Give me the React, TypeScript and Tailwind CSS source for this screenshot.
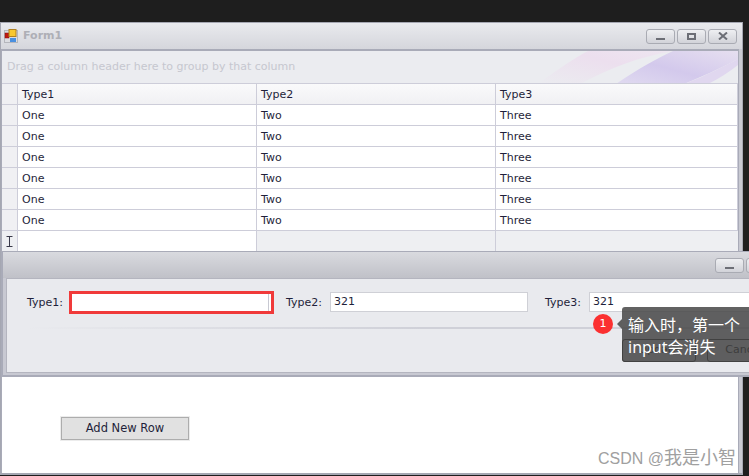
const rows = Array.from({ length: 6 });

const gridCols = "grid grid-cols-[16px_239px_239px_242px]";

const cell = "border-r border-b border-[#cdcdd9] pl-[4px] pt-[2px] flex items-center";

const TitleButton = ({ children }: { children: React.ReactNode }) => (
  <div className="w-[29px] h-[15px] rounded-[3px] border border-[#a9abb3] bg-gradient-to-b from-[#eeeff2] to-[#d2d3d9] flex items-center justify-center">
    {children}
  </div>
);

const FormIcon = () => (
  <svg width="14" height="14" viewBox="0 0 14 14" className="shrink-0">
    <rect x="0.5" y="1.5" width="13" height="12" fill="#dcdde2" stroke="#b5b6bc" />
    <rect x="1" y="4" width="4" height="5" fill="#c01810" stroke="#801010" strokeWidth="0.5" />
    <rect x="5" y="0.5" width="7" height="7" fill="#f8c830" stroke="#b08020" />
    <rect x="6" y="9" width="6" height="4" fill="#4a90e0" />
  </svg>
);

const WindowButtons = () => (
  <>
    <TitleButton>
      <div className="w-[9px] h-[2px] mt-[6px] bg-[#6c6e76]" />
    </TitleButton>
    <TitleButton>
      <div className="w-[9px] h-[7px] border-2 border-[#6c6e76]" />
    </TitleButton>
    <TitleButton>
      <svg width="10" height="8" viewBox="0 0 10 8">
        <path d="M1 0.5 L9 7.5 M9 0.5 L1 7.5" stroke="#6c6e76" strokeWidth="2" />
      </svg>
    </TitleButton>
  </>
);

const Banner = () => (
  <svg width="200" height="33" viewBox="0 0 200 33" className="absolute right-0 top-0">
    <defs>
      <linearGradient id="pink" x1="0" y1="1" x2="1" y2="0">
        <stop offset="0" stopColor="#ebecf0" />
        <stop offset="0.6" stopColor="#ecdfee" />
        <stop offset="1" stopColor="#eee6f1" />
      </linearGradient>
      <linearGradient id="purple" x1="0" y1="1" x2="1" y2="0">
        <stop offset="0" stopColor="#e0daf0" />
        <stop offset="0.45" stopColor="#d3c9ec" />
        <stop offset="1" stopColor="#e6dff0" />
      </linearGradient>
    </defs>
    <path d="M0 33 C25 15 40 5 50 0 L135 0 C100 6 70 18 42 33 Z" fill="url(#pink)" />
    <path d="M78 33 C100 18 118 8 135 0 L200 0 L200 8 C180 19 160 27 146 33 Z" fill="url(#purple)" />
    <path d="M146 33 C165 26 185 16 200 8 L200 14 C190 22 180 28 170 33 Z" fill="#e0d7ef" />
  </svg>
);

const Field = ({
  label,
  value,
  labelWidth,
  inputWidth,
  className = "",
}: {
  label: string;
  value: string;
  labelWidth: string;
  inputWidth: string;
  className?: string;
}) => (
  <div className={`flex items-center ${className}`}>
    <span className={`pt-[2px] text-[11px] text-[#1f1f3a] ${labelWidth}`}>{label}</span>
    <div className={`h-[20px] ${inputWidth} bg-white border border-[#cfd0d6] pl-[3px] text-[11px] leading-[18px] text-[#1f1f3a]`}>
      {value}
    </div>
  </div>
);

export default function App() {
  return (
    <div
      className="relative w-[749px] h-[476px] overflow-hidden bg-[#1e1e1e] pt-[22px]"
      style={{ fontFamily: '"DejaVu Sans", "Noto Sans CJK SC", sans-serif' }}
    >
      <div className="w-[743px] h-[453px] border border-[#a5a7b2] border-b-[2px] bg-[#c8c9d2] flex flex-col">
        <div className="h-[26px] shrink-0 bg-gradient-to-b from-[#e9eaee] to-[#d5d6dc] flex items-center pl-[3px] pr-[5px]">
          <FormIcon />
          <span className="ml-[5px] text-[11px] font-bold text-[#aeafb6]">Form1</span>
          <div className="ml-auto flex gap-[2px]">
            <WindowButtons />
          </div>
        </div>
        <div className="flex-1 mr-[3px] bg-white border-l border-t-2 border-r border-[#a9abb8]">
          <div className="relative h-[33px] bg-[#ebecf0] border-b border-[#cdcdd9] overflow-hidden flex items-center pl-[5px]">
            <span className="text-[11px] text-[#c6c7cf]">Drag a column header here to group by that column</span>
            <Banner />
          </div>
          <div className={`${gridCols} h-[21px] text-[11px] text-[#1f1f3a] bg-gradient-to-b from-[#fafafb] to-[#f0f0f3]`}>
            <div className="border-r border-b border-[#cdcdd9] bg-[#f0f0f3]" />
            <div className={cell}>Type1</div>
            <div className={cell}>Type2</div>
            <div className={cell}>Type3</div>
          </div>
          {rows.map((_, i) => (
            <div key={i} className={`${gridCols} h-[21px] text-[11px] text-[#1f1f3a] bg-white`}>
              <div className="border-r border-b border-[#cdcdd9] bg-[#f0f0f3]" />
              <div className={cell}>One</div>
              <div className={cell}>Two</div>
              <div className={cell}>Three</div>
            </div>
          ))}
          <div className={`${gridCols} h-[21px] bg-[#eeeff2]`}>
            <div className="border-r border-[#cdcdd9] flex items-center justify-center">
              <svg width="7" height="11" viewBox="0 0 7 11">
                <path d="M0.5 0.5 H6.5 M0.5 10.5 H6.5 M3.5 0.5 V10.5" stroke="#3a3a4a" strokeWidth="1" fill="none" />
              </svg>
            </div>
            <div className="border-r border-[#cdcdd9] bg-white" />
            <div className="border-r border-[#cdcdd9]" />
            <div />
          </div>
          <div className="h-[124px]" />
          <div className="pl-[59px] pt-[39px]">
            <button className="w-[128px] h-[23px] bg-[#e1e1e1] border border-[#adadad] outline outline-1 outline-[#ececec] text-[11.5px] text-[#1f1f3a]">
              Add New Row
            </button>
          </div>
        </div>
      </div>

      {/* edit form popup, runs off the right of the shot */}
      <div className="absolute left-[2px] top-[251px] w-[822px] h-[126px] border border-[#a9abb8] border-b-[2px] bg-[#c8c9d2] flex flex-col">
        <div className="h-[26px] shrink-0 bg-gradient-to-b from-[#d9dadf] to-[#c0c1c8] flex items-center justify-end gap-[2px] pr-[17px]">
          <WindowButtons />
        </div>
        <div className="flex-1 ml-[3px] mb-[2px] bg-[#e9eaee] border-l border-t border-b border-[#b4b5bf] pl-[20px] pt-[13px]">
          <div className="flex items-center">
            <Field label="Type1:" value="" labelWidth="w-[44px]" inputWidth="w-[201px]" />
            <Field label="Type2:" value="321" labelWidth="w-[44px]" inputWidth="w-[198px]" className="ml-[14px]" />
            <Field label="Type3:" value="321" labelWidth="w-[44px]" inputWidth="w-[198px]" className="ml-[17px]" />
          </div>
          <div className="h-[2px] mt-[15px] mr-[4px] bg-gradient-to-r from-[#e9eaee] via-[#cfd0d8] to-[#cfd0d8]" />
          <div className="flex gap-[11px] ml-[595px] mt-[10px]">
            <div className="w-[74px] h-[23px] border border-[#222] rounded-[3px] bg-[#e1e2e6] text-[11px] flex items-center justify-center text-black">Update</div>
            <div className="w-[74px] h-[23px] border border-[#222] rounded-[3px] bg-[#e1e2e6] text-[11px] flex items-center justify-center text-black">Cancel</div>
          </div>
        </div>
      </div>

      {/* red outline drawn on the screenshot */}
      <div className="absolute left-[69px] top-[291px] w-[205px] h-[23px] border-[3px] border-[#f03a3a]" />
      <div className="absolute left-[268px] top-[294px] w-[1px] h-[17px] bg-[#c8c9d2]" />

      {/* annotation */}
      <div className="absolute left-[593px] top-[314px] w-[20px] h-[20px] rounded-full bg-[#fb3030] text-white text-[11px] flex items-center justify-center">1</div>
      <div className="absolute left-[617px] top-[319px] w-0 h-0 border-y-[5px] border-y-transparent border-r-[5px] border-r-[#5e5e5e]" />
      <div
        className="absolute left-[622px] top-[307px] w-[130px] h-[55px] rounded-[3px] bg-[#464646]/85 text-white text-[16px] leading-[22px] pl-[6px] pt-[7px]"
        style={{ fontFamily: '"Noto Sans", "Noto Sans CJK SC", sans-serif' }}
      >
        <div className="whitespace-nowrap">输入时，第一个</div>
        <div className="whitespace-nowrap">input会消失</div>
      </div>

      <div
        className="absolute left-[598px] top-[447px] text-[16px] leading-[22px] text-[#a0a0a0] whitespace-nowrap"
        style={{ fontFamily: '"Liberation Sans", "Noto Sans CJK SC", sans-serif' }}
      >
        CSDN @<span className="text-[18px]">我是小智</span>
      </div>
    </div>
  );
}
